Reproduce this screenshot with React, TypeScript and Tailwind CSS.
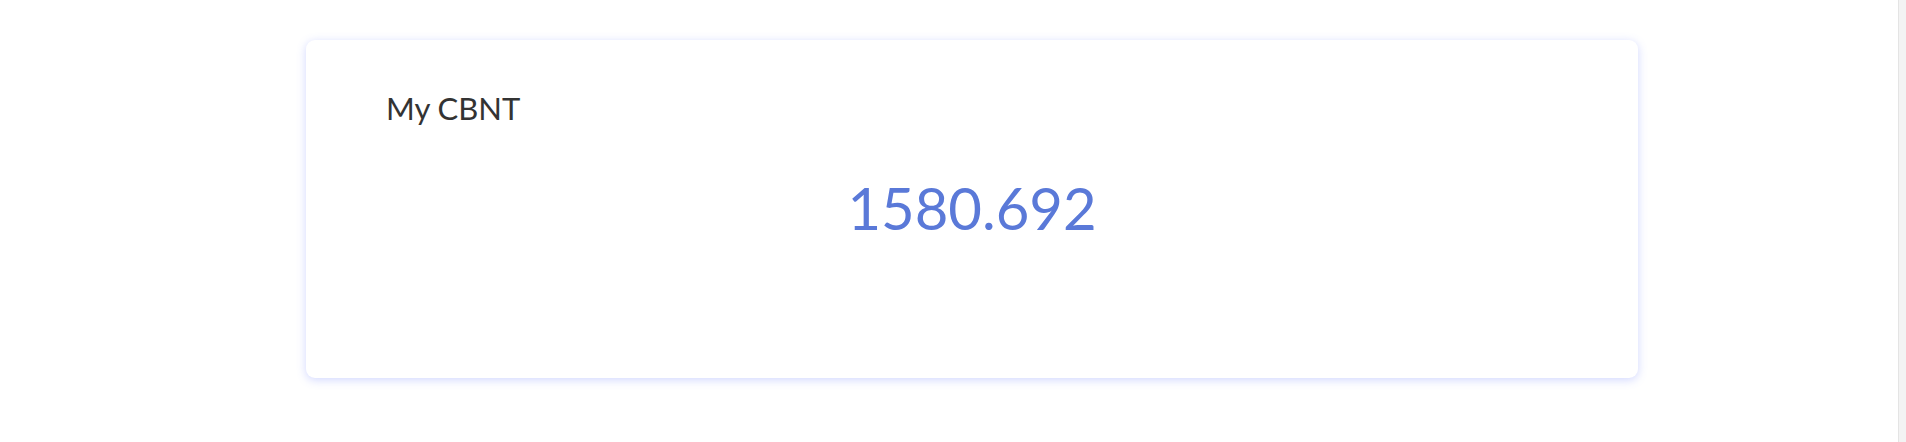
export default function App() {
  return (
    <div className="flex h-[442px] w-full bg-white" style={{ fontFamily: 'Lato, "Noto Sans", sans-serif' }}>
      {/* Content */}
      <div className="flex-1 pl-[306px] pt-[40px]">
        <div className="w-[1332px] h-[338px] rounded-[9px] bg-white shadow-[0_2px_10px_rgba(90,110,255,0.28)] px-[80px] pt-[46px]">
          <p className="text-[31px] leading-[44px] font-normal text-[#333]">My CBNT</p>
          <p className="mt-[42px] text-center text-[58px] leading-[72px] font-normal text-[#5a79d8]">1580.692</p>
        </div>
      </div>

      {/* Scrollbar gutter */}
      <div className="w-[8px] h-full bg-[#f3f3f3] border-l border-[#e4e4e4]" />
    </div>
  );
}
